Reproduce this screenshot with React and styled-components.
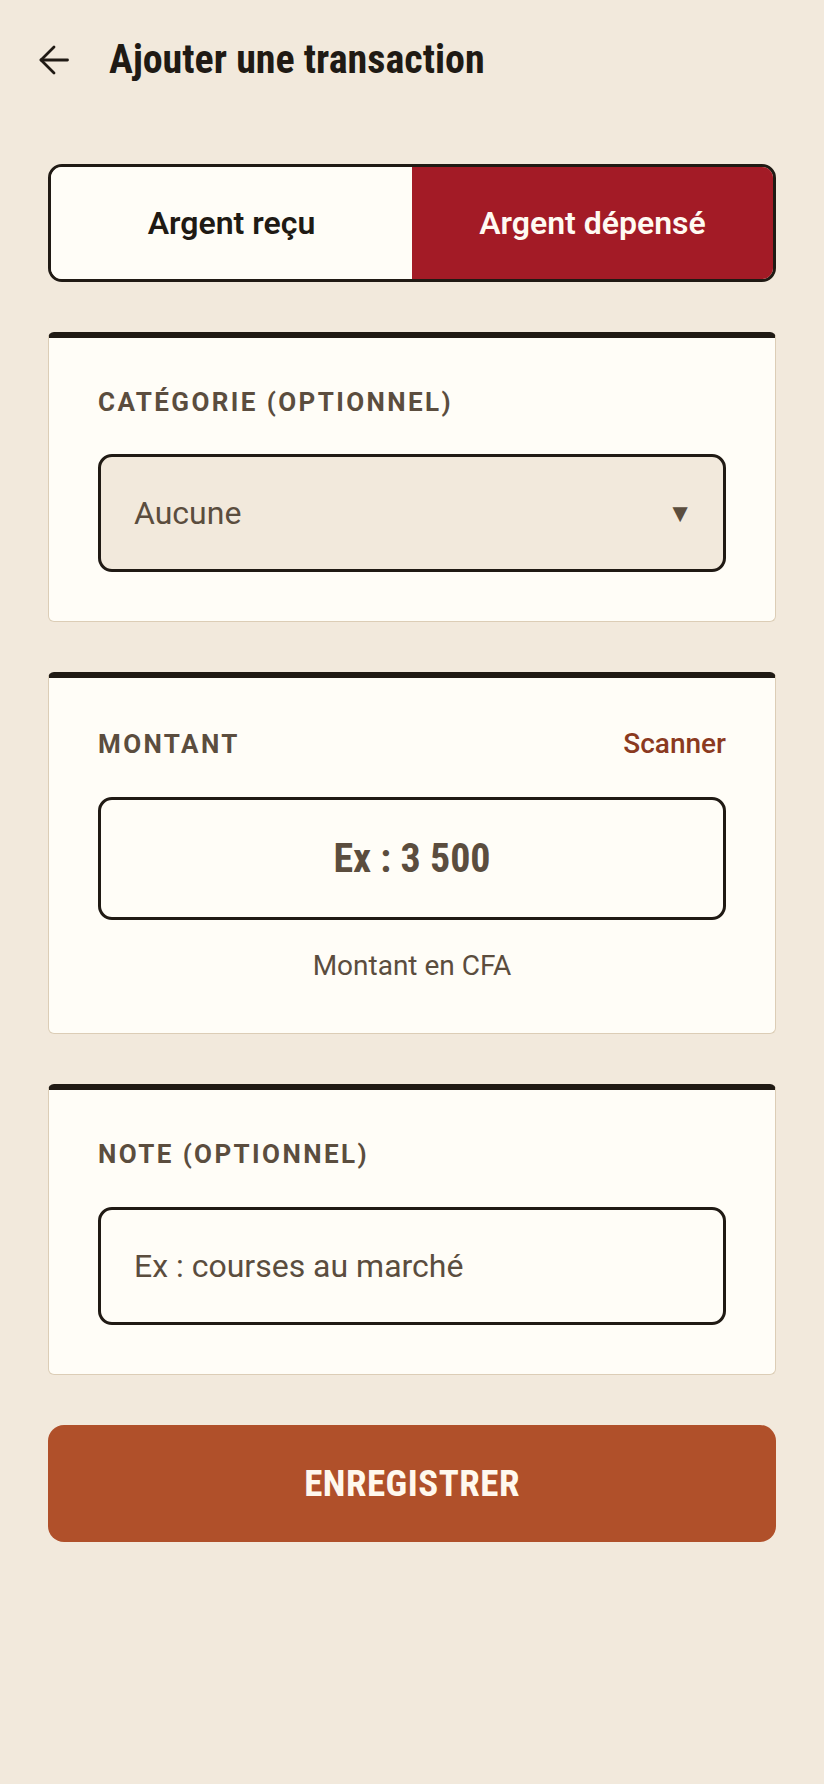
import { useState } from "react";
import styled, { createGlobalStyle } from "styled-components";

const GlobalStyle = createGlobalStyle`
   * {
      box-sizing: border-box;
   }

   body {
      margin: 0;
      background: #f2e9dc;
      font-family: Roboto, "Liberation Sans", Arial, sans-serif;
      color: #201a14;
   }
`;

const Page = styled.div`
   min-height: 1784px;
   background: #f2e9dc;
   padding-bottom: 60px;
`;

const Header = styled.header`
   height: 117px;
   display: flex;
   align-items: center;
   gap: 40px;
   padding: 3px 39px 0;
`;

const BackButton = styled.button`
   display: flex;
   align-items: center;
   justify-content: center;
   width: 30px;
   height: 30px;
   padding: 0;
   border: none;
   background: none;
   color: #201a14;
   cursor: pointer;
`;

const Title = styled.h1`
   margin: 0;
   font-size: 40px;
   font-weight: 700;
   font-stretch: 75%;
   line-height: 1.2;
   color: #201a14;
`;

const Main = styled.main`
   display: flex;
   flex-direction: column;
   gap: 50px;
   padding: 47px 48px 0;
`;

const Toggle = styled.div`
   display: grid;
   grid-template-columns: 1fr 1fr;
   height: 118px;
   border: 3px solid #201a14;
   border-radius: 14px;
   overflow: hidden;
`;

const ToggleOption = styled.button`
   border: none;
   margin: 0;
   font-family: Roboto, "Liberation Sans", Arial, sans-serif;
   font-size: 32px;
   font-weight: 600;
   cursor: pointer;
   background: ${(p) => (p.$active ? "#a31b26" : "#fffdf7")};
   color: ${(p) => (p.$active ? "#fffaf2" : "#201a14")};
`;

const Card = styled.section`
   background: #fffdf7;
   border: 1px solid #dccdb6;
   border-top: 6px solid #201a14;
   border-radius: 6px;
   padding: 49px 49px ${(p) => (p.$loose ? "51px" : "49px")};
`;

const LabelRow = styled.div`
   display: flex;
   align-items: baseline;
   justify-content: space-between;
   margin-bottom: 36px;
`;

const Label = styled.label`
   display: block;
   font-size: 26px;
   font-weight: 700;
   letter-spacing: 2.4px;
   line-height: 1.2;
   text-transform: uppercase;
   color: #5b4d3e;
   margin-bottom: ${(p) => (p.$inRow ? "0" : "36px")};
`;

const LinkButton = styled.button`
   border: none;
   background: none;
   padding: 0;
   font-family: Roboto, "Liberation Sans", Arial, sans-serif;
   font-size: 28px;
   font-weight: 500;
   line-height: 1.2;
   color: #8b3a1f;
   cursor: pointer;
`;

const SelectBox = styled.div`
   display: flex;
   align-items: center;
   justify-content: space-between;
   height: 118px;
   padding: 0 30px 0 33px;
   border: 3px solid #201a14;
   border-radius: 14px;
   background: #f2e9dc;
   font-size: 32px;
   color: #5b4d3e;
   cursor: pointer;
`;

const Caret = styled.span`
   font-size: 26px;
   color: #5b4d3e;
`;

const TextField = styled.input`
   display: block;
   width: 100%;
   height: ${(p) => (p.$big ? "123px" : "118px")};
   padding: 0 33px;
   border: 3px solid #201a14;
   border-radius: 14px;
   background: #fffdf7;
   outline: none;
   font-family: Roboto, "Liberation Sans", Arial, sans-serif;
   font-size: ${(p) => (p.$big ? "40px" : "32px")};
   font-weight: ${(p) => (p.$big ? 700 : 400)};
   font-stretch: ${(p) => (p.$big ? "75%" : "100%")};
   text-align: ${(p) => (p.$big ? "center" : "left")};
   color: #201a14;

   &::placeholder {
      color: #5b4d3e;
      opacity: 1;
   }
`;

const Hint = styled.p`
   margin: 29px 0 0;
   font-size: 28px;
   line-height: 1.2;
   text-align: center;
   color: #5b4d3e;
`;

const SaveButton = styled.button`
   height: 117px;
   border: none;
   border-radius: 16px;
   background: #b0502a;
   font-family: Roboto, "Liberation Sans", Arial, sans-serif;
   font-size: 37px;
   font-weight: 700;
   font-stretch: 75%;
   letter-spacing: 0.5px;
   color: #fff8ee;
   cursor: pointer;
`;

const ArrowLeft = () => (
   <svg width="30" height="30" viewBox="0 0 30 30" fill="none" stroke="currentColor" strokeWidth="2.8" strokeLinecap="round" strokeLinejoin="round">
      <path d="M28.5 15H2" />
      <path d="M15 2L2 15l13 13" />
   </svg>
);

const App = () => {

   const [kind, setKind] = useState('expense');

   return (
      <Page>
         <GlobalStyle />

         <Header>
            <BackButton aria-label="Retour">
               <ArrowLeft />
            </BackButton>
            <Title>Ajouter une transaction</Title>
         </Header>

         <Main>
            <Toggle>
               <ToggleOption $active={kind === 'income'} onClick={() => setKind('income')}>Argent reçu</ToggleOption>
               <ToggleOption $active={kind === 'expense'} onClick={() => setKind('expense')}>Argent dépensé</ToggleOption>
            </Toggle>

            <Card>
               <Label>Catégorie (optionnel)</Label>
               <SelectBox>
                  <span>Aucune</span>
                  <Caret>▼</Caret>
               </SelectBox>
            </Card>

            <Card $loose>
               <LabelRow>
                  <Label $inRow>Montant</Label>
                  <LinkButton>Scanner</LinkButton>
               </LabelRow>
               <TextField $big inputMode="numeric" placeholder="Ex : 3 500" />
               <Hint>Montant en CFA</Hint>
            </Card>

            <Card>
               <Label>Note (optionnel)</Label>
               <TextField placeholder="Ex : courses au marché" />
            </Card>

            <SaveButton>ENREGISTRER</SaveButton>
         </Main>
      </Page>
   );
}

export default App;
